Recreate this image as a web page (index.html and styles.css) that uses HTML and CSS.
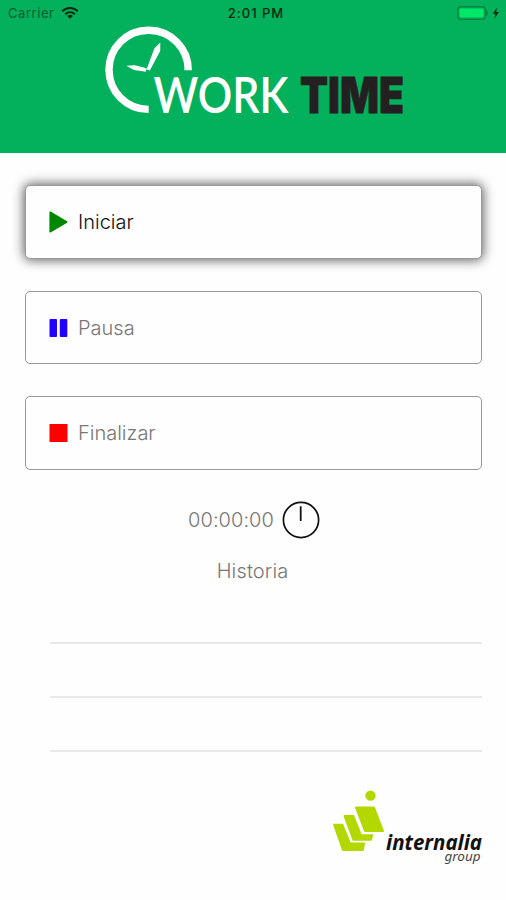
FILE: index.html
```html
<!DOCTYPE html>
<html lang="es">
<head>
<meta charset="utf-8">
<title>Work Time</title>
<link rel="stylesheet" href="styles.css">
</head>
<body>
<header class="header">
  <div class="status">
    <div class="status-left">
      <span class="carrier">Carrier</span>
      <svg class="wifi" width="18" height="14" viewBox="0 0 18 14" fill="none" stroke="#06280f" stroke-width="2">
        <path d="M1.2 5.2C5.6.9 12.4.9 16.8 5.2M4.1 8.2C7 5.6 11 5.6 13.9 8.2"/>
        <path d="M6.2 9.9Q9 7.8 11.8 9.9L9 12.8Z" fill="#06280f" stroke="none"/>
      </svg>
    </div>
    <span class="time">2:01 PM</span>
    <div class="status-right">
      <svg width="46" height="16" viewBox="0 0 46 16">
        <rect x="1.7" y="1.7" width="27.6" height="12.6" rx="3" fill="none" stroke="#078541" stroke-width="1.4"/>
        <rect x="3.5" y="3.5" width="24" height="9" rx="1.5" fill="#02e765"/>
        <path d="M30.5 5.5Q32.5 8 30.5 10.5Z" fill="#078541" stroke="#078541"/>
        <path d="M41 2.6L36.8 8.7H39.4L38.6 13.3L43 7.1H40.2Z" fill="#06280f"/>
      </svg>
    </div>
  </div>
  <svg class="logo" width="310" height="120" viewBox="100 24 310 120">
    <path d="M148.7 109.4A39.6 39.6 0 1 1 188.2 70.3" fill="none" stroke="#fff" stroke-width="7.4"/>
    <path d="M146.5 69.5L154.3 48.5L160.3 42.5L160.2 51L149.8 70.5ZM126.3 65.8L135 65.3L146.5 68.3L145.8 71.8L134 70Z" fill="#fff"/>
    <text class="work" x="153.5" y="113" textLength="135" lengthAdjust="spacingAndGlyphs">WORK</text>
    <text class="time-word" x="300" y="113" textLength="104" lengthAdjust="spacingAndGlyphs">TIME</text>
  </svg>
</header>
<main class="content">
  <div class="actions">
    <button class="action active">
      <svg width="19" height="22" viewBox="0 0 19 22"><path d="M1.2 1.3V20.7L17.7 11Z" fill="#008700" stroke="#008700" stroke-width="1.6" stroke-linejoin="round"/></svg>
      <span class="label">Iniciar</span>
    </button>
    <button class="action">
      <svg width="19" height="22" viewBox="0 0 19 22" fill="#2100ff"><rect x=".5" y="2" width="7.5" height="18" rx="1"/><rect x="10.8" y="2" width="7.5" height="18" rx="1"/></svg>
      <span class="label">Pausa</span>
    </button>
    <button class="action">
      <svg width="19" height="22" viewBox="0 0 19 22"><rect x=".5" y="2" width="18" height="18" fill="#f00"/></svg>
      <span class="label">Finalizar</span>
    </button>
  </div>
  <div class="timer">
    <span class="elapsed">00:00:00</span>
    <svg width="38" height="38" viewBox="0 0 38 38" fill="none" stroke="#111">
      <circle cx="19" cy="19" r="17.6" stroke-width="1.7"/><path d="M18.7 5.3V20" stroke-width="1.8"/>
    </svg>
  </div>
  <h2 class="history-title">Historia</h2>
  <ul class="history"><li></li><li></li><li></li></ul>
</main>
<footer class="footer">
  <svg width="156" height="86" viewBox="330 786 156 86">
    <g fill="#b2d800" stroke="#b2d800" stroke-width="2" stroke-linejoin="round">
      <circle cx="370.5" cy="795.6" r="4.2"/>
      <path d="M356 807.5H374L383 831H365Z"/>
      <path d="M344.5 816H353.3L361 835.3H372.2L371 839.8H353.5Z"/>
      <path d="M334.2 824.8H342.4L350 843.5H364L362.8 850H343Z"/>
    </g>
    <text class="brand" x="386" y="850" textLength="96" lengthAdjust="spacingAndGlyphs">internalia</text>
    <text class="brand-sub" x="444.5" y="860.5" textLength="36" lengthAdjust="spacingAndGlyphs">group</text>
  </svg>
</footer>
</body>
</html>
```

FILE: styles.css
```css
* { box-sizing: border-box; }
body {
  margin: 0;
  width: 506px;
  height: 900px;
  display: flex;
  flex-direction: column;
  background: #fefefe;
  font-family: Inter, "Liberation Sans", sans-serif;
}
.header {
  height: 153px;
  background: #03b15c;
  display: flex;
  flex-direction: column;
}
.status {
  height: 24px;
  padding: 2px 4px 0 8px;
  display: grid;
  grid-template-columns: 1fr auto 1fr;
  align-items: center;
  font-size: 13px;
  color: #06280f;
}
.status-left { display: flex; align-items: center; gap: 7px; }
.carrier { color: #075c2b; letter-spacing: 0.55px; }
.time { font-weight: 500; letter-spacing: 1px; margin-left: 2px; }
.status-right { display: flex; justify-content: flex-end; }
.logo { margin-left: 100px; flex: none; overflow: visible; }
.work { font: 600 50px Lato, sans-serif; fill: #fff; }
.time-word { font: 900 50px Inter, sans-serif; fill: #242021; stroke: #242021; stroke-width: 0.8px; }
.content { padding: 32px 24px 0 25px; }
.actions { display: flex; flex-direction: column; gap: 32px; }
.action {
  height: 73.7px;
  padding: 0 24px 0 23px;
  border: 1.5px solid #999;
  border-radius: 5px;
  background: #fefefe;
  display: flex;
  align-items: center;
  gap: 10px;
  font: 300 20px Inter, sans-serif;
  color: #777;
}
.action.active { color: #111; box-shadow: 0 0 12px 1px rgba(0, 0, 0, 0.65); }
.timer {
  margin-top: 31px;
  padding-left: 1px;
  display: flex;
  justify-content: center;
  align-items: center;
  gap: 8px;
  color: #777;
  font-size: 20px;
  font-weight: 300;
}
.elapsed { letter-spacing: 0.05px; }
.history-title {
  margin: 20px 0 0;
  padding-right: 2px;
  text-align: center;
  font-size: 20px;
  line-height: 24px;
  font-weight: 300;
  letter-spacing: 0.15px;
  color: #777;
}
.history { list-style: none; margin: 7px 0 0 25px; padding: 0; }
.history li { height: 54px; border-bottom: 2px solid #e9e9e9; }
.footer { margin-top: 34px; padding-left: 330px; }
.footer svg { display: block; overflow: visible; }
.brand { font: italic 700 21px "Noto Sans", sans-serif; fill: #111; }
.brand-sub { font: italic 400 12.5px "Noto Sans", sans-serif; fill: #444; }
```
